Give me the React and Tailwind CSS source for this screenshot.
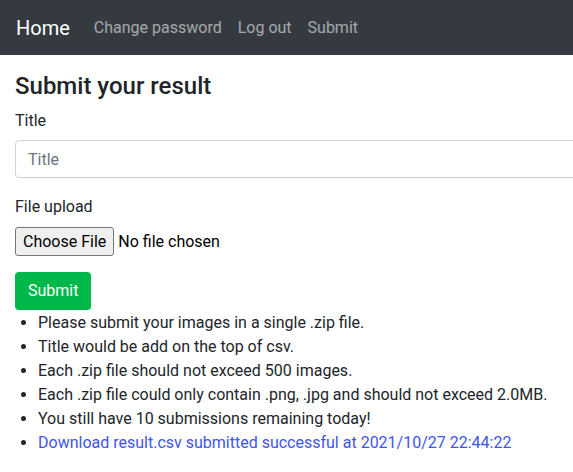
export default function App() {
  return (
    <div className="w-[573px] h-[472px] overflow-hidden bg-white text-[#212529]" style={{ fontFamily: "Roboto, 'Liberation Sans', sans-serif" }}>
      <nav className="h-[55px] bg-[#343a40] flex items-center px-4">
        <span className="text-[20px] leading-[30px] text-white mr-4">Home</span>
        <div className="flex text-[16px] leading-6 text-white/55">
          <span className="px-2">Change password</span>
          <span className="px-2">Log out</span>
          <span className="px-2">Submit</span>
        </div>
      </nav>
      <div className="pl-[15px] pt-[17px]">
        <h3 className="text-[24px] leading-[29px] font-medium mb-2">Submit your result</h3>
        <div className="mb-[17px]">
          <label className="block text-[16px] leading-6 mb-[7px]">Title</label>
          <input
            type="text"
            placeholder="Title"
            className="block w-[700px] h-[38px] px-3 text-[16px] border border-[#ced4da] rounded-[4px] placeholder:text-[#6c757d] outline-none"
          />
        </div>
        <div className="mb-4">
          <label className="block text-[16px] leading-6 mb-2">File upload</label>
          <div className="flex items-center h-[29px]">
            <span className="h-[29px] px-[7px] flex items-center text-[16px] bg-[#efefef] border border-[#767676] rounded-[3px] text-black">Choose File</span>
            <span className="ml-[4px] text-[16px] text-black">No file chosen</span>
          </div>
        </div>
        <button className="h-[38px] px-[13px] rounded-[4px] bg-[#00b74a] text-white text-[16px]">Submit</button>
        <ul className="list-disc pl-[23px] mt-[1px] text-[16px] leading-6">
          <li>Please submit your images in a single .zip file.</li>
          <li>Title would be add on the top of csv.</li>
          <li>Each .zip file should not exceed 500 images.</li>
          <li>Each .zip file could only contain .png, .jpg and should not exceed 2.0MB.</li>
          <li>You still have 10 submissions remaining today!</li>
          <li><a className="text-[#4054f5]">Download result.csv submitted successful at 2021/10/27 22:44:22</a></li>
        </ul>
      </div>
    </div>
  );
}
